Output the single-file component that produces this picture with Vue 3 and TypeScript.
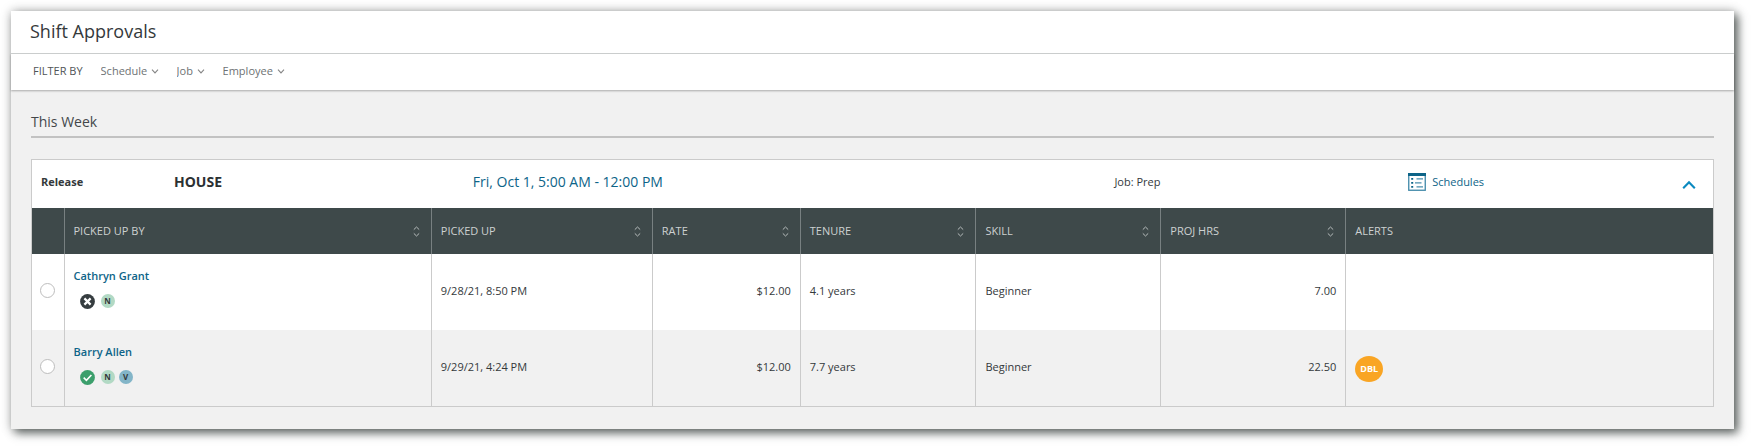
<script setup lang="ts">
import { ref } from 'vue'

interface Column {
  key: string
  label: string
  sortable: boolean
}

interface Candidate {
  id: number
  name: string
  eligible: boolean
  tags: string[]
  pickedUp: string
  rate: string
  tenure: string
  skill: string
  hours: string
  alerts: string[]
}

const filters: string[] = ['Schedule', 'Job', 'Employee']

const columns: Column[] = [
  { key: 'name', label: 'PICKED UP BY', sortable: true },
  { key: 'picked', label: 'PICKED UP', sortable: true },
  { key: 'rate', label: 'RATE', sortable: true },
  { key: 'tenure', label: 'TENURE', sortable: true },
  { key: 'skill', label: 'SKILL', sortable: true },
  { key: 'hours', label: 'PROJ HRS', sortable: true },
  { key: 'alerts', label: 'ALERTS', sortable: false },
]

const candidates: Candidate[] = [
  {
    id: 1, name: 'Cathryn Grant', eligible: false, tags: ['N'], pickedUp: '9/28/21, 8:50 PM',
    rate: '$12.00', tenure: '4.1 years', skill: 'Beginner', hours: '7.00', alerts: [],
  },
  {
    id: 2, name: 'Barry Allen', eligible: true, tags: ['N', 'V'], pickedUp: '9/29/21, 4:24 PM',
    rate: '$12.00', tenure: '7.7 years', skill: 'Beginner', hours: '22.50', alerts: ['DBL'],
  },
]

const selected = ref<number | null>(null)
const expanded = ref(true)
</script>

<template>
  <main class="window">
    <header class="title-bar">
      <h1>Shift Approvals</h1>
    </header>

    <div class="filter-bar">
      <span class="filter-title">FILTER BY</span>
      <div v-for="f in filters" :key="f" class="filter">
        <select :aria-label="f">
          <option>{{ f }}</option>
        </select>
        <svg width="8" height="6" viewBox="0 0 8 6" aria-hidden="true">
          <path d="M1 1.7 4 4.9 7 1.7" fill="none" stroke="#858585" stroke-width="1.1" />
        </svg>
      </div>
    </div>

    <section class="content">
      <h2>This Week</h2>

      <article class="card">
        <div class="shift">
          <span class="kind">Release</span>
          <span class="house">HOUSE</span>
          <a class="when" href="#shift">Fri, Oct 1, 5:00 AM - 12:00 PM</a>
          <span>Job: Prep</span>
          <a class="schedules" href="#schedules">
            <svg width="18" height="18" viewBox="0 0 18 18" aria-hidden="true">
              <rect x="0.75" y="0.75" width="16.5" height="16.5" fill="#fff" stroke="#3f88a8" stroke-width="1.3" />
              <rect x="0" y="0" width="18" height="3" fill="#0d6488" />
              <path d="M3.2 5h2v1.8h-2zM3.2 9h2v1.8h-2zM3.2 13h2v1.8h-2z" fill="#0d6488" />
              <path d="M8.5 5.9H15M7 9.9h6.5M8.5 13.9H15" stroke="#4b90ae" stroke-width="1.2" />
            </svg>
            <span>Schedules</span>
          </a>
          <button class="toggle" type="button" aria-label="Toggle shift" :aria-expanded="expanded" @click="expanded = !expanded">
            <svg width="14" height="10" viewBox="0 0 14 10" aria-hidden="true">
              <path d="M1.2 8.3 7 2.3l5.8 6" fill="none" stroke="#0b8ac0" stroke-width="2.1" />
            </svg>
          </button>
        </div>

        <table v-if="expanded">
          <colgroup>
            <col class="c-pick" />
            <col v-for="c in columns" :key="c.key" :class="'c-' + c.key" />
          </colgroup>
          <thead>
            <tr>
              <th></th>
              <th v-for="c in columns" :key="c.key" scope="col">
                <button v-if="c.sortable" class="sort" type="button">
                  <span>{{ c.label }}</span>
                  <svg width="7" height="11" viewBox="0 0 7 11" aria-hidden="true">
                    <path d="M0.8 3.6 3.5 1l2.7 2.6M0.8 7.4 3.5 10l2.7-2.6" fill="none" stroke="#b9bfbf" stroke-width="1" />
                  </svg>
                </button>
                <span v-else>{{ c.label }}</span>
              </th>
            </tr>
          </thead>
          <tbody>
            <tr v-for="p in candidates" :key="p.id">
              <td class="pick">
                <input v-model="selected" type="radio" name="candidate" :value="p.id" :aria-label="p.name" />
              </td>
              <td class="person">
                <a class="name" href="#employee">{{ p.name }}</a>
                <div class="badges">
                  <svg v-if="p.eligible" class="state" width="15" height="15" viewBox="0 0 15 15" aria-hidden="true">
                    <circle cx="7.5" cy="7.5" r="7.4" fill="#3c9f6c" />
                    <path d="M3.7 7.7 6.4 10.3 11.4 5" fill="none" stroke="#fff" stroke-width="1.6" />
                  </svg>
                  <svg v-else class="state" width="15" height="15" viewBox="0 0 15 15" aria-hidden="true">
                    <circle cx="7.5" cy="7.5" r="7.4" fill="#363d40" />
                    <path d="M4.4 4.4l6.2 6.2M10.6 4.4l-6.2 6.2" stroke="#fff" stroke-width="2.2" />
                  </svg>
                  <span v-for="t in p.tags" :key="t" class="tag" :class="'tag-' + t.toLowerCase()">{{ t }}</span>
                </div>
              </td>
              <td>{{ p.pickedUp }}</td>
              <td class="num">{{ p.rate }}</td>
              <td>{{ p.tenure }}</td>
              <td>{{ p.skill }}</td>
              <td class="num">{{ p.hours }}</td>
              <td>
                <span v-for="a in p.alerts" :key="a" class="alert">{{ a }}</span>
              </td>
            </tr>
          </tbody>
        </table>
      </article>
    </section>
  </main>
</template>

<style>
body {
  background: #fff;
}
</style>

<style scoped>
* {
  box-sizing: border-box;
}

.window {
  margin: 11px 19px 19px 11px;
  background: #f1f1f1;
  box-shadow: 4px 4px 9px rgba(40, 48, 46, 0.7), 0 0 10px rgba(0, 0, 0, 0.25);
  font-family: 'Open Sans', 'Noto Sans', sans-serif;
  font-size: 11px;
  line-height: 16px;
  color: #34393b;
}

a {
  color: #0d6488;
  text-decoration: none;
}

button,
select {
  appearance: none;
  margin: 0;
  padding: 0;
  border: 0;
  background: none;
  font: inherit;
  color: inherit;
  cursor: pointer;
}

.title-bar {
  display: flex;
  align-items: center;
  height: 43px;
  padding: 0 19px 2px;
  background: #fff;
  border-bottom: 1px solid #cfd2d2;
}

h1 {
  margin: 0;
  font-size: 18px;
  line-height: 24px;
  font-weight: 400;
}

.filter-bar {
  display: flex;
  align-items: center;
  gap: 18px;
  height: 36px;
  padding: 0 22px 2px;
  background: #fff;
  box-shadow: 0 1px 2px rgba(0, 0, 0, 0.3);
  color: #6e7274;
}

.filter-title {
  color: #505456;
}

.filter {
  display: flex;
  align-items: center;
  gap: 3px;
}

.content {
  padding: 22px 20px 22px;
}

h2 {
  margin: 0 0 21px;
  padding-bottom: 4px;
  border-bottom: 2px solid #c2c2c2;
  font-size: 14px;
  line-height: 20px;
  font-weight: 400;
  color: #43474a;
}

.card {
  border: 1px solid #cbcbcb;
  background: #fff;
}

.shift {
  display: grid;
  grid-template-columns: 133px 299fr 642fr 294fr 274fr auto;
  align-items: center;
  height: 48px;
  padding: 0 17px 4px 9px;
}

.kind {
  font-weight: 700;
}

.house {
  font-size: 14px;
  font-weight: 700;
  color: #2b3032;
}

.when {
  font-size: 14px;
}

.schedules {
  display: flex;
  align-items: center;
  gap: 6px;
}

.toggle {
  display: flex;
  padding: 6px 0 0;
}

table {
  width: 100%;
  table-layout: fixed;
  border-collapse: collapse;
}

.c-pick {
  width: 32px;
}

.c-picked {
  width: 13.15%;
}

.c-rate {
  width: 8.8%;
}

.c-tenure {
  width: 10.45%;
}

.c-skill,
.c-hours {
  width: 11%;
}

th {
  height: 46px;
  padding: 0 9px;
  border-left: 1px solid #788081;
  background: #3e494a;
  font-weight: 400;
  text-align: left;
  color: #cdd1d1;
}

th:first-child,
td:first-child {
  border-left: 0;
}

.sort {
  display: flex;
  align-items: center;
  justify-content: space-between;
  width: 100%;
  padding-right: 2px;
}

td {
  height: 76px;
  padding: 0 9px 2px;
  border-left: 1px solid #cbcbcb;
}

tbody tr:nth-child(even) {
  background: #f1f1f1;
}

.pick {
  padding: 0;
  text-align: center;
}

.person {
  padding-bottom: 8px;
}

.pick input {
  appearance: none;
  display: block;
  width: 15px;
  height: 15px;
  margin: 0 auto 4px;
  border: 1px solid #bdbdbd;
  border-radius: 50%;
  background: #fff;
}

.pick input:checked {
  border: 5px solid #0d6488;
}

.num {
  text-align: right;
}

.name {
  display: block;
  font-weight: 600;
}

.badges {
  display: flex;
  gap: 4px;
  padding: 10px 0 0 6px;
}

.state {
  margin-right: 2px;
}

.tag {
  width: 14px;
  height: 14px;
  border-radius: 50%;
  font-size: 8px;
  line-height: 14px;
  font-weight: 700;
  text-align: center;
}

.tag-n {
  background: #b2d9c4;
}

.tag-v {
  background: #83b5c8;
}

.alert {
  display: block;
  width: 28px;
  height: 26px;
  margin-top: 4px;
  border-radius: 50%;
  background: #f9a524;
  font-size: 9px;
  line-height: 26px;
  font-weight: 700;
  text-align: center;
  color: #fff;
}
</style>
